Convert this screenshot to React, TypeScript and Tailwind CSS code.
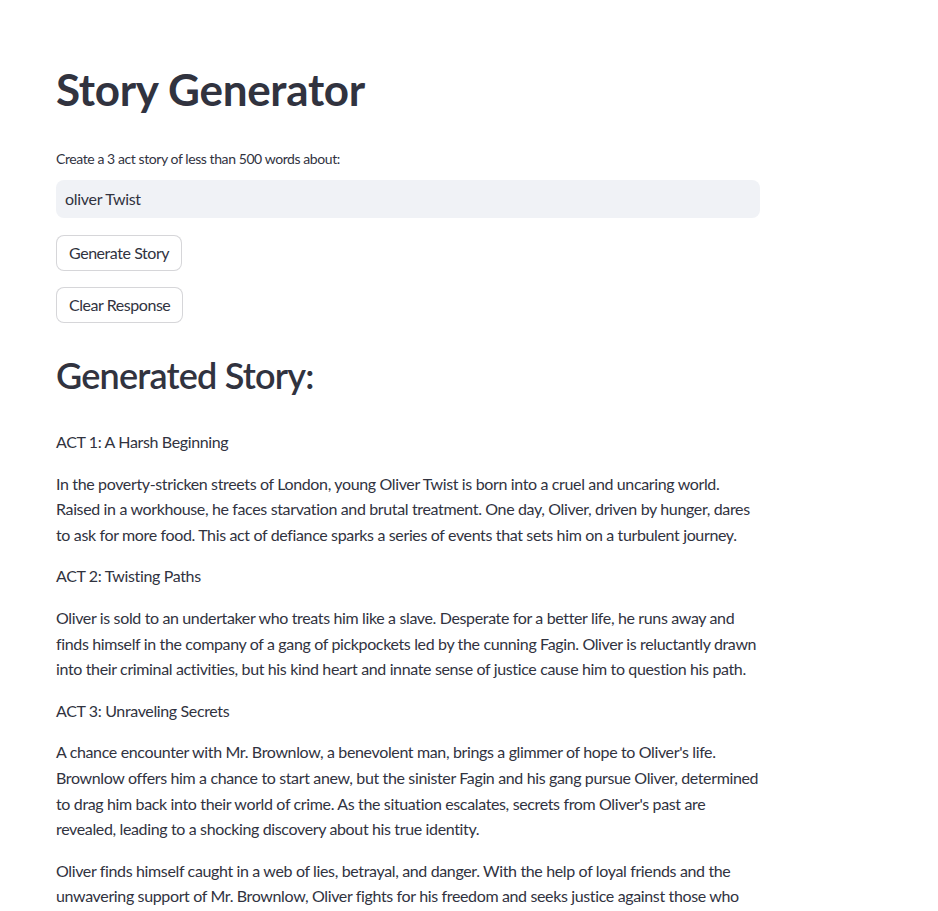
const story: string[][] = [
  ["ACT 1: A Harsh Beginning"],
  [
    "In the poverty-stricken streets of London, young Oliver Twist is born into a cruel and uncaring world.",
    "Raised in a workhouse, he faces starvation and brutal treatment. One day, Oliver, driven by hunger, dares",
    "to ask for more food. This act of defiance sparks a series of events that sets him on a turbulent journey.",
  ],
  ["ACT 2: Twisting Paths"],
  [
    "Oliver is sold to an undertaker who treats him like a slave. Desperate for a better life, he runs away and",
    "finds himself in the company of a gang of pickpockets led by the cunning Fagin. Oliver is reluctantly drawn",
    "into their criminal activities, but his kind heart and innate sense of justice cause him to question his path.",
  ],
  ["ACT 3: Unraveling Secrets"],
  [
    "A chance encounter with Mr. Brownlow, a benevolent man, brings a glimmer of hope to Oliver's life.",
    "Brownlow offers him a chance to start anew, but the sinister Fagin and his gang pursue Oliver, determined",
    "to drag him back into their world of crime. As the situation escalates, secrets from Oliver's past are",
    "revealed, leading to a shocking discovery about his true identity.",
  ],
  [
    "Oliver finds himself caught in a web of lies, betrayal, and danger. With the help of loyal friends and the",
    "unwavering support of Mr. Brownlow, Oliver fights for his freedom and seeks justice against those who",
  ],
];

export default function App() {
  return (
    <div className="min-h-screen bg-white text-[#31333f] font-['Lato','Noto_Sans',sans-serif]">
      <div className="w-[704px] ml-14 pt-[43px] flex flex-col">
        <h1 className="text-[44px] leading-[1.2] font-bold tracking-[-0.3px] pt-5 pb-4">Story Generator</h1>

        <div className="mt-4">
          <label className="block text-[14px] leading-[22px] tracking-[-0.42px]">
            Create a 3 act story of less than 500 words about:
          </label>
          <div className="mt-[10px] h-[38px] rounded-lg bg-[#f0f2f6] flex items-center px-[9px] text-[16px] tracking-[-0.3px]">
            oliver Twist
          </div>
        </div>

        <div className="mt-[17px] flex flex-col gap-4 items-start">
          <button className="h-[36px] px-3 rounded-lg border border-[#31333f]/20 bg-white text-[16px] tracking-[-0.45px]">
            Generate Story
          </button>
          <button className="h-[36px] px-3 rounded-lg border border-[#31333f]/20 bg-white text-[16px] tracking-[-0.45px]">
            Clear Response
          </button>
        </div>

        <h2 className="mt-4 pt-[15px] pb-4 text-[36px] leading-[1.2] font-semibold tracking-[-0.8px]">
          Generated Story:
        </h2>

        <div className="mt-4 text-[16px] leading-[1.6] tracking-[-0.36px]">
          {story.map((para, i) => (
            <p key={i} className="mb-4 whitespace-nowrap">
              {para.map((line, j) => (
                <span key={j}>
                  {line}
                  {j < para.length - 1 && <br />}
                </span>
              ))}
            </p>
          ))}
        </div>
      </div>
    </div>
  );
}
